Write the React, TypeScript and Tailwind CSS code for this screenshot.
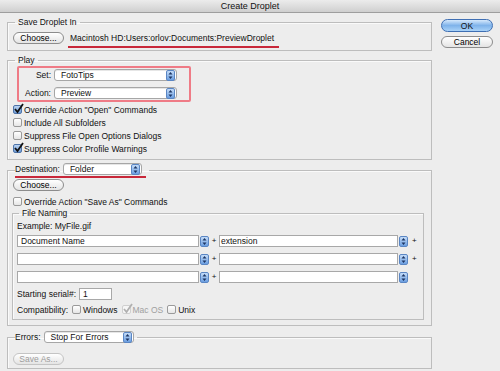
import type { ReactNode } from "react";

function Stepper() {
  return (
    <span className="w-[9px] h-[11px] shrink-0 rounded-[2px] border border-[#5a86c4] bg-linear-to-b from-[#c4dcf8] to-[#6b9ee0] flex items-center justify-center">
      <svg width="5" height="7" viewBox="0 0 5 7">
        <path d="M2.5 0 L4.5 2.6 H0.5 Z M2.5 7 L4.5 4.4 H0.5 Z" fill="#1d3563" />
      </svg>
    </span>
  );
}

function PopUp({ value, className }: { value: string; className: string }) {
  return (
    <div className={"h-[12px] bg-white border border-[#a6a6a6] rounded-[3px] flex items-center justify-between pl-[6px] pr-[1px] shadow-[inset_0_1px_0_#e6e6e6] " + className}>
      <span>{value}</span>
      <Stepper />
    </div>
  );
}

function Button({ label, disabled, className = "" }: { label: string; disabled?: boolean; className?: string }) {
  return (
    <div
      className={
        "h-[12px] w-[51px] rounded-full border flex items-center justify-center bg-linear-to-b from-white to-[#e4e4e4] " +
        (disabled ? "border-[#c4c4c4] text-[#9c9c9c]" : "border-[#8c8c8c] text-black") +
        " " + className
      }
    >
      {label}
    </div>
  );
}

function Check({ checked, disabled, label }: { checked?: boolean; disabled?: boolean; label: string }) {
  return (
    <div className="flex items-center gap-[2px] h-[13px]">
      <span
        className={
          "relative w-[9px] h-[9px] rounded-[2px] border shrink-0 " +
          (checked && !disabled
            ? "border-[#4d73a8] bg-linear-to-b from-[#b9d3f2] to-[#6f9bd6]"
            : disabled
            ? "border-[#d0d0d0] bg-[#f6f6f6]"
            : "border-[#9a9a9a] bg-linear-to-b from-white to-[#e6e6e6]")
        }
      >
        {checked && (
          <svg className="absolute -left-[1px] -top-[3px]" width="11" height="11" viewBox="0 0 11 11">
            <path d="M2 6 L4.5 9 L10 1" fill="none" stroke={disabled ? "#b0b0b0" : "#111"} strokeWidth="1.8" />
          </svg>
        )}
      </span>
      <span className={disabled ? "text-[#a0a0a0]" : ""}>{label}</span>
    </div>
  );
}

function Group({ legend, children, className = "" }: { legend: ReactNode; children: ReactNode; className?: string }) {
  return (
    <fieldset className={"border border-[#bdbdbd] shadow-[inset_1px_1px_0_#fafafa] " + className}>
      <legend className="ml-[2px] px-[3px] leading-[10px]">{legend}</legend>
      {children}
    </fieldset>
  );
}

function NameRow({ left, right, lastPlus = true }: { left?: string; right?: string; lastPlus?: boolean }) {
  return (
    <div className="flex items-center h-[12px]">
      <div className="w-[182px] h-[12px] bg-white border border-[#a8a8a8] pl-[3px] flex items-center">{left}</div>
      <span className="ml-[1px]"><Stepper /></span>
      <span className="w-[10px] text-center text-[8px]">+</span>
      <div className="w-[179px] h-[12px] bg-white border border-[#a8a8a8] pl-[1px] flex items-center">{right}</div>
      <span className="ml-[1px]"><Stepper /></span>
      {lastPlus && <span className="ml-[4px] text-[8px]">+</span>}
    </div>
  );
}

export default function App() {
  return (
    <div className="w-[500px] h-[371px] overflow-hidden bg-[#ededed] text-[8.5px] leading-[10px] text-[#111] font-['Liberation_Sans',Arial,sans-serif]">
      <div className="h-[13px] bg-linear-to-b from-[#ececec] to-[#cfcfcf] border-b border-[#9e9e9e] flex items-center justify-center text-[9px]">
        Create Droplet
      </div>
      <div className="flex">
        <div className="w-[432px] pl-[7px]">
          <Group legend="Save Droplet In" className="mt-[4px] pl-[5px] pt-[5px] pb-[2px]">
            <div className="flex items-center gap-[6px]">
              <Button label="Choose..." />
              <span className="leading-[12px]">Macintosh HD:Users:orlov:Documents:PreviewDroplet</span>
            </div>
            <div className="mt-[2px] ml-[55px] w-[211px] h-[2px] bg-[#c8283a]" />
          </Group>

          <Group legend="Play" className="mt-[4px] pl-[5px] pt-[1px] pb-[4px]">
            <div className="w-[174px] ml-[4px] border-2 border-[#ef7b86] rounded-[2px] py-[1px] flex flex-col gap-[6px]">
              <div className="flex items-center">
                <span className="w-[35px] text-right pr-[3px]">Set:</span>
                <PopUp value="FotoTips" className="w-[123px]" />
              </div>
              <div className="flex items-center">
                <span className="w-[35px] text-right pr-[3px]">Action:</span>
                <PopUp value="Preview" className="w-[123px]" />
              </div>
            </div>
            <div className="mt-[1px]">
              <Check checked label={'Override Action "Open" Commands'} />
              <Check label="Include All Subfolders" />
              <Check label="Suppress File Open Options Dialogs" />
              <Check checked label="Suppress Color Profile Warnings" />
            </div>
          </Group>

          <Group
            className="mt-[3px] pl-[5px] pr-[7px] pt-[1px] pb-[5px]"
            legend={
              <span className="flex items-center gap-[3px] border-b-2 border-[#c8283a] pb-[1px] -ml-[3px] pr-[4px]">
                <span>Destination:</span>
                <PopUp value="Folder" className="w-[79px]" />
              </span>
            }
          >
            <Button label="Choose..." />
            <div className="mt-[4px]">
              <Check label={'Override Action "Save As" Commands'} />
            </div>
            <Group legend="File Naming" className="-ml-[1px] pl-[4px] pt-[3px] pb-[3px]">
              <div>Example: MyFile.gif</div>
              <div className="mt-[4px] flex flex-col gap-[6px]">
                <NameRow left="Document Name" right="extension" />
                <NameRow />
                <NameRow lastPlus={false} />
              </div>
              <div className="mt-[5px] flex items-center gap-[3px]">
                <span>Starting serial#:</span>
                <div className="w-[33px] h-[12px] bg-white border border-[#a8a8a8] pl-[3px] flex items-center">1</div>
              </div>
              <div className="mt-[3px] flex items-center gap-[4px]">
                <span>Compatibility:</span>
                <Check label="Windows" />
                <Check checked disabled label="Mac OS" />
                <Check label="Unix" />
              </div>
            </Group>
          </Group>

          <Group
            className="mt-[5px] pl-[5px] pt-[10px] pb-[3px]"
            legend={
              <span className="flex items-center gap-[3px] -ml-[3px]">
                <span>Errors:</span>
                <PopUp value="Stop For Errors" className="w-[90px]" />
              </span>
            }
          >
            <Button label="Save As..." disabled />
          </Group>
        </div>
        <div className="pl-[9px] pt-[6px] flex flex-col gap-[4px]">
          <div className="h-[13px] w-[52px] rounded-full border border-[#3f6fb3] bg-linear-to-b from-[#d5e8fb] via-[#7fb3ea] to-[#a9d2f8] flex items-center justify-center">
            OK
          </div>
          <Button label="Cancel" className="w-[52px] h-[12px]" />
        </div>
      </div>
    </div>
  );
}
